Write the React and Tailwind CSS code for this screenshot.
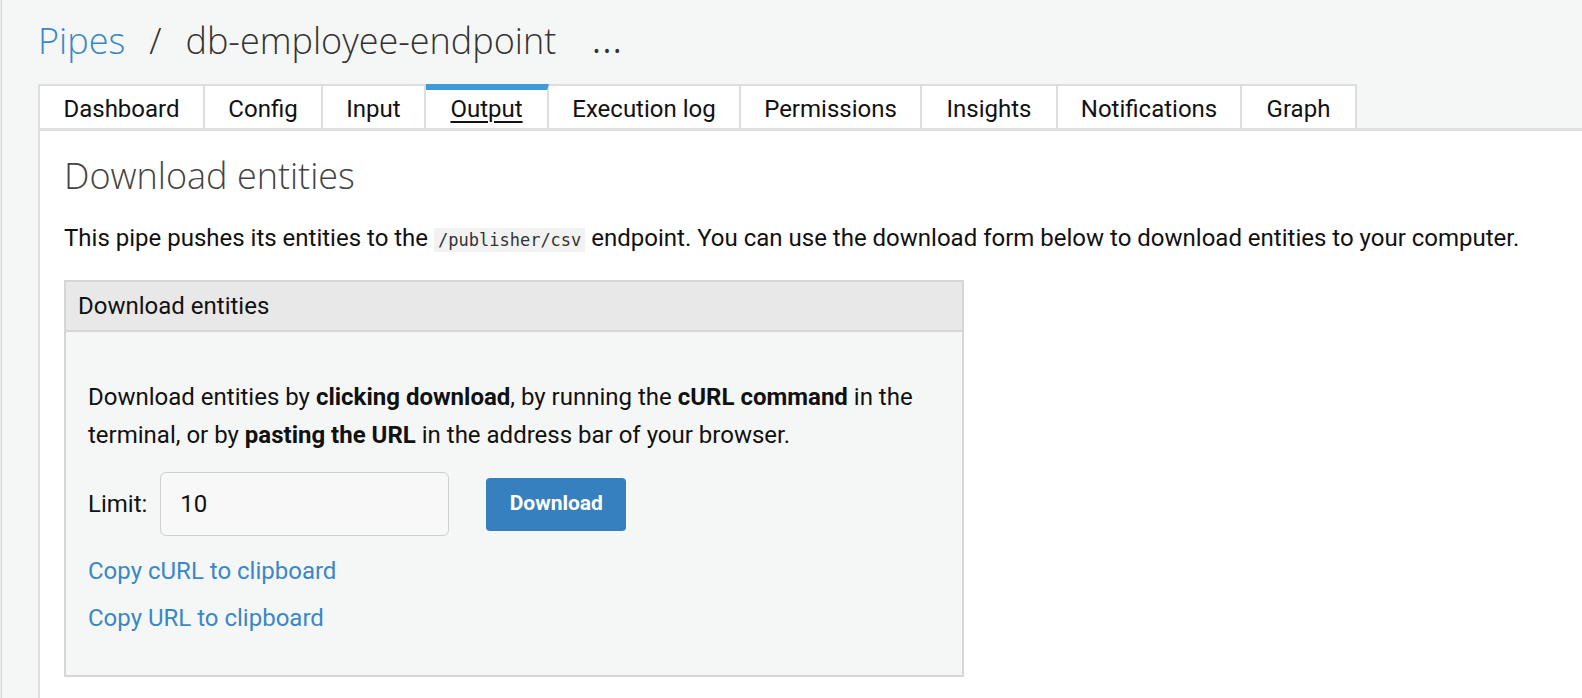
import React from 'react';

const tabs = ['Dashboard', 'Config', 'Input', 'Output', 'Execution log', 'Permissions', 'Insights', 'Notifications', 'Graph'];
const tabWidths = {
  Dashboard: 'w-[167px]',
  Config: 'w-[118px]',
  Input: 'w-[103px]',
  Output: 'w-[123px]',
  'Execution log': 'w-[192px]',
  Permissions: 'w-[181px]',
  Insights: 'w-[136px]',
  Notifications: 'w-[184px]',
  Graph: 'w-[115px]',
};

export default function App() {
  const active = 'Output';

  return (
    <div className="min-h-screen flex bg-[#f5f7f6] font-['Roboto',sans-serif] text-[#111]">
      {/* sidebar edge */}
      <div className="w-[2px] bg-[#ececec] border-r border-[#d8d8d8] shrink-0" />

      <div className="flex-1 flex flex-col pl-[36px]">
        {/* Breadcrumb */}
        <div className="h-[84px] flex items-center pb-[2px] text-[36px] font-light font-['Open_Sans',sans-serif]">
          <a className="text-[#3a87c8]">Pipes</a>
          <span className="text-[#333] mx-[24px]">/</span>
          <span className="text-[#333]">db-employee-endpoint</span>
          <span className="text-[#333] ml-[36px] font-normal text-[32px] tracking-[2px]">...</span>
        </div>

        {/* Tabs */}
        <div className="flex">
          {tabs.map((t, i) => (
            <div
              key={t}
              className={`h-[44px] flex items-center justify-center text-[24px] bg-white border-r-2 border-[#dedede] ${
                i === 0 ? 'border-l-2' : ''
              } ${t === active ? 'border-t-[6px] border-t-[#3f9bd6]' : 'border-t-2 pt-[4px]'} ${tabWidths[t]}`}
            >
              <span className={t === active ? 'underline underline-offset-[4px] decoration-[2px]' : ''}>{t}</span>
            </div>
          ))}
        </div>

        {/* Content */}
        <div className="flex-1 bg-white border-l-2 border-t-[3px] border-[#dedede] pl-[24px] pt-[23px]">
          <h1 className="text-[36px] font-light text-[#444] leading-[44px] font-['Open_Sans',sans-serif]">
            Download entities
          </h1>

          <p className="mt-[24px] text-[24px] leading-[32px]">
            This pipe pushes its entities to the{' '}
            <code className="font-['DejaVu_Sans_Mono',monospace] text-[17px] bg-[#f2f2f2] px-[4px] py-[2px] text-[#333]">
              /publisher/csv
            </code>{' '}
            endpoint. You can use the download form below to download entities to your computer.
          </p>

          <div className="mt-[24px] w-[900px] border-2 border-[#d6d6d6] bg-[#f5f7f6]">
            <div className="h-[50px] flex items-center px-[12px] bg-[#e8e8e8] border-b-2 border-[#d6d6d6] text-[24px]">
              Download entities
            </div>
            <div className="px-[22px] pt-[46px] pb-[43px]">
              <p className="text-[24px] leading-[38px]">
                Download entities by <b>clicking download</b>, by running the <b>cURL command</b> in the terminal, or by{' '}
                <b>pasting the URL</b> in the address bar of your browser.
              </p>

              <div className="mt-[18px] flex items-center">
                <label className="text-[24px]">Limit:</label>
                <input
                  defaultValue="10"
                  className="ml-[13px] w-[289px] h-[64px] rounded-[6px] border border-[#cfcfcf] bg-[#f7f8f7] px-[19px] text-[24px] outline-none"
                />
                <button className="ml-[37px] w-[140px] h-[53px] rounded-[4px] bg-[#3680c0] text-white font-bold text-[21px]">
                  Download
                </button>
              </div>

              <div className="mt-[21px] flex flex-col gap-[19px] text-[24px] text-[#3a87c8] leading-[28px]">
                <a>Copy cURL to clipboard</a>
                <a>Copy URL to clipboard</a>
              </div>
            </div>
          </div>
        </div>
      </div>
    </div>
  );
}
